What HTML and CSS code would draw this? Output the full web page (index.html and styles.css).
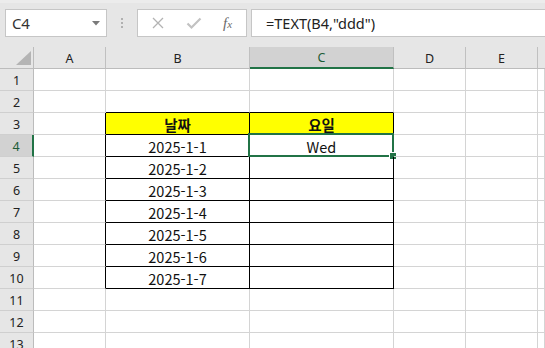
FILE: index.html
```html
<!DOCTYPE html>
<html lang="ko">
<head>
<meta charset="utf-8">
<link rel="stylesheet" href="styles.css">
</head>
<body>
<div class="toolbar">
  <div class="namebox">
    <span class="ref">C4</span>
    <svg class="arrow" width="8" height="5" viewBox="0 0 8 5"><path d="M0 0H8L4 4.5Z" fill="#7a7a7a"/></svg>
  </div>
  <div class="grip"><i></i><i></i><i></i></div>
  <div class="controls">
    <svg class="ic" width="14" height="14" viewBox="0 0 14 14"><path d="M2 2L12 12M12 2L2 12" stroke="#b3b3b3" stroke-width="1.3" fill="none"/></svg>
    <svg class="ic" width="16" height="14" viewBox="0 0 16 14"><path d="M1.5 7.5L5.5 11.5L14.5 2.5" stroke="#c2c2c2" stroke-width="2.2" fill="none"/></svg>
    <span class="fx">f<span class="x">x</span></span>
  </div>
  <div class="formula">=TEXT(B4,"ddd")</div>
</div>
<div class="sheet">
  <div class="corner"><svg width="15" height="14" viewBox="0 0 15 14"><path d="M15 0V14H0Z" fill="#b4b4b4"/></svg></div>
  <div class="ch">A</div><div class="ch">B</div><div class="ch sel">C</div><div class="ch">D</div><div class="ch">E</div><div class="ch last"></div>

  <div class="rh">1</div><div class="c"></div><div class="c"></div><div class="c"></div><div class="c"></div><div class="c"></div><div class="c"></div>
  <div class="rh">2</div><div class="c"></div><div class="c tb"></div><div class="c tb"></div><div class="c"></div><div class="c"></div><div class="c"></div>

  <div class="rh">3</div><div class="c lb"></div><div class="c t hd">날짜</div><div class="c t hd">요일</div><div class="c"></div><div class="c"></div><div class="c"></div>
  <div class="rh rsel">4</div><div class="c lb"></div><div class="c t">2025-1-1</div><div class="c t cur">Wed<span class="selbox"><span class="handle"></span></span></div><div class="c"></div><div class="c"></div><div class="c"></div>
  <div class="rh">5</div><div class="c lb"></div><div class="c t">2025-1-2</div><div class="c t"></div><div class="c"></div><div class="c"></div><div class="c"></div>
  <div class="rh">6</div><div class="c lb"></div><div class="c t">2025-1-3</div><div class="c t"></div><div class="c"></div><div class="c"></div><div class="c"></div>
  <div class="rh">7</div><div class="c lb"></div><div class="c t">2025-1-4</div><div class="c t"></div><div class="c"></div><div class="c"></div><div class="c"></div>
  <div class="rh">8</div><div class="c lb"></div><div class="c t">2025-1-5</div><div class="c t"></div><div class="c"></div><div class="c"></div><div class="c"></div>
  <div class="rh">9</div><div class="c lb"></div><div class="c t">2025-1-6</div><div class="c t"></div><div class="c"></div><div class="c"></div><div class="c"></div>
  <div class="rh">10</div><div class="c lb"></div><div class="c t">2025-1-7</div><div class="c t"></div><div class="c"></div><div class="c"></div><div class="c"></div>
  <div class="rh">11</div><div class="c"></div><div class="c"></div><div class="c"></div><div class="c"></div><div class="c"></div><div class="c"></div>
  <div class="rh">12</div><div class="c"></div><div class="c"></div><div class="c"></div><div class="c"></div><div class="c"></div><div class="c"></div>
  <div class="rh">13</div><div class="c"></div><div class="c"></div><div class="c"></div><div class="c"></div><div class="c"></div><div class="c"></div>
</div>
</body>
</html>
```

FILE: styles.css
```css
* { box-sizing: border-box; }
html, body { margin: 0; padding: 0; }
body {
  width: 545px;
  height: 348px;
  overflow: hidden;
  background: #fff;
  font-family: "Noto Sans", "Noto Sans CJK KR", sans-serif;
}
.toolbar {
  height: 47px;
  background: #e6e6e6;
  border-top: 3px solid #ececec;
  display: flex;
  align-items: flex-start;
  padding: 6px 0 0 5px;
}
.namebox {
  width: 102px;
  height: 28px;
  background: #fff;
  border: 1px solid #c6c6c6;
  display: flex;
  align-items: center;
  justify-content: space-between;
  padding: 0 6px 0 6px;
}
.ref {
  font-family: "Noto Sans", sans-serif;
  font-size: 15px;
  color: #333;
  letter-spacing: -0.3px;
}
.arrow { margin-top: 1px; }
.grip {
  width: 30px;
  height: 28px;
  display: flex;
  flex-direction: column;
  align-items: center;
  justify-content: center;
  gap: 2px;
}
.grip i {
  display: block;
  width: 2px;
  height: 2px;
  background: #b0b0b0;
}
.controls {
  width: 110px;
  height: 28px;
  background: #fff;
  border: 1px solid #c6c6c6;
  display: flex;
  align-items: center;
  padding: 0 0 0 13px;
}
.controls .ic:nth-child(1) { margin-right: 21px; }
.controls .ic:nth-child(2) { margin-right: 21px; }
.fx {
  font-family: "Liberation Serif", serif;
  font-style: italic;
  font-size: 15px;
  color: #6a6a6a;
  line-height: 1;
}
.fx .x { font-size: 11px; }
.formula {
  flex: 1;
  height: 28px;
  margin-left: 4px;
  margin-right: -2px;
  background: #fff;
  border: 1px solid #c6c6c6;
  padding: 0 0 0 14px;
  display: flex;
  align-items: center;
  font-family: "Noto Sans", sans-serif;
  font-size: 14.5px;
  color: #222;
}
.sheet {
  display: grid;
  grid-template-columns: 34px 72px 144px 144px 72px 72px 1fr;
  grid-template-rows: 22px;
  grid-auto-rows: 22px;
}
.corner {
  background: #e6e6e6;
  border-right: 1px solid #bcbcbc;
  border-bottom: 1px solid #bcbcbc;
  display: flex;
  align-items: flex-end;
  justify-content: flex-end;
  padding: 0 2px 3px 0;
}
.ch {
  background: #e6e6e6;
  border-right: 1px solid #c0c0c0;
  border-bottom: 1px solid #bcbcbc;
  display: flex;
  align-items: center;
  justify-content: center;
  font-family: "Noto Sans", sans-serif;
  font-size: 12.5px;
  color: #222;
  padding-top: 1px;
}
.ch.last { border-right: none; }
.ch.sel {
  background: #d2d2d2;
  border-bottom: 2px solid #217346;
  color: #1d5c37;
}
.rh {
  background: #e6e6e6;
  border-right: 1px solid #bcbcbc;
  border-bottom: 1px solid #cfcfcf;
  display: flex;
  align-items: center;
  justify-content: center;
  font-family: "Noto Sans", sans-serif;
  font-size: 12.5px;
  color: #222;
  padding-top: 2px;
}
.rh.rsel {
  background: #d2d2d2;
  border-right: 2px solid #217346;
  color: #1d5c37;
}
.c {
  border-right: 1px solid #d4d4d4;
  border-bottom: 1px solid #d4d4d4;
  display: flex;
  align-items: center;
  justify-content: center;
  font-family: "Noto Sans CJK KR", "Noto Sans", sans-serif;
  font-size: 14.5px;
  color: #111;
  padding-top: 1px;
  position: relative;
}
.c.tb { border-bottom-color: #000; }
.c.lb { border-right-color: #000; }
.c.t {
  border-right-color: #000;
  border-bottom-color: #000;
}
.c.hd {
  background: #ffff00;
  font-weight: 700;
}
.selbox {
  position: absolute;
  left: -2px;
  top: -2px;
  right: -1px;
  bottom: -1px;
  border: 2px solid #217346;
}
.handle {
  position: absolute;
  right: -4px;
  bottom: -4px;
  width: 7px;
  height: 7px;
  background: #217346;
  border-left: 1px solid #fff;
  border-top: 1px solid #fff;
}
```
